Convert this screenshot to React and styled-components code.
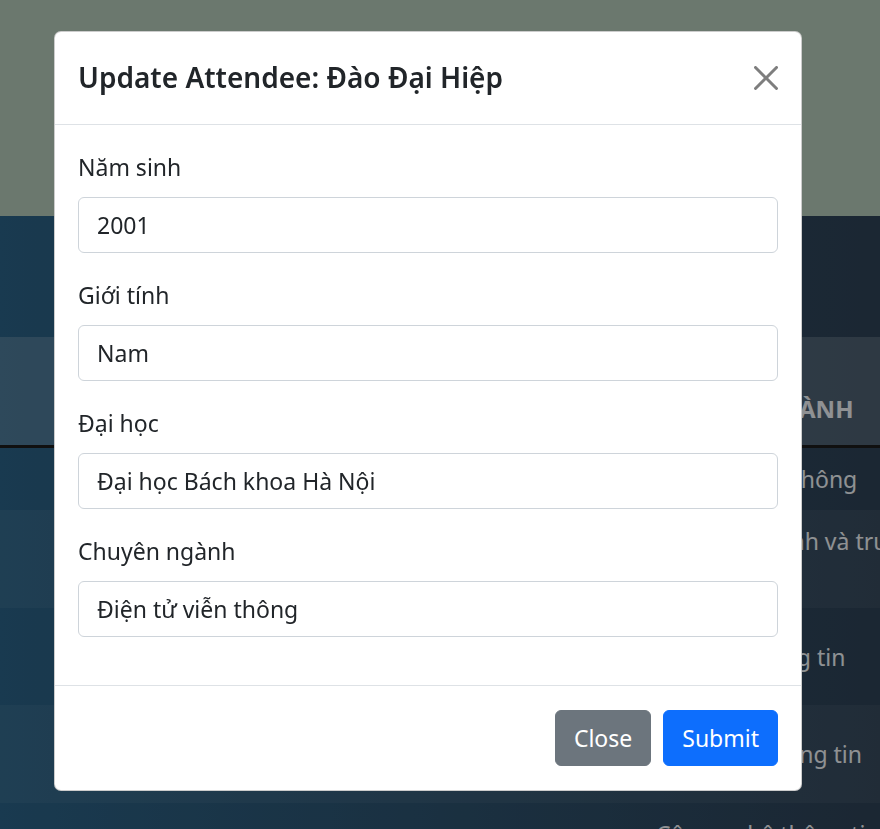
import React from 'react';
import styled, { createGlobalStyle } from 'styled-components';

const GlobalStyle = createGlobalStyle`
    * { box-sizing: border-box; }
    html, body {
        margin: 0;
        padding: 0;
        overflow: hidden;
    }
    body {
        font-family: "Noto Sans", "Open Sans", sans-serif;
        color: #212529;
    }
`;

const Page = styled.div`
    width: 100%;
    min-height: 100vh;
    background: linear-gradient(to right, #2b6185, #2d4155);
`;

const Hero = styled.div`
    height: 216px;
    background: #b2c8b7;
`;

const TableSection = styled.div`
    padding-top: 121px;
    overflow: hidden;
`;

const Table = styled.table`
    width: 984px;
    table-layout: fixed;
    border-collapse: collapse;
    font-size: 23px;
    line-height: 36px;
    color: #eef2f6;
`;

const HeadRow = styled.tr`
    background: rgba(255, 255, 255, 0.16);
    border-bottom: 3px solid #1c1c1c;
`;

const Th = styled.th`
    width: ${p => p.$w}px;
    height: 109px;
    padding: 0 12px 18px;
    font-size: 24px;
    text-align: ${p => (p.$center ? 'center' : 'left')};
    vertical-align: bottom;
    font-weight: 700;
    white-space: nowrap;
    overflow: hidden;
`;

const Row = styled.tr`
    height: ${p => p.$h}px;
    background: ${p => (p.$striped ? 'rgba(255, 255, 255, 0.05)' : 'transparent')};
`;

const Td = styled.td`
    padding: 0 12px;
    vertical-align: middle;
    text-align: ${p => (p.$center ? 'center' : 'left')};
    white-space: ${p => (p.$wrap ? 'normal' : 'nowrap')};
    overflow: hidden;
`;

const Backdrop = styled.div`
    position: fixed;
    inset: 0;
    background: rgba(0, 0, 0, 0.4);
`;

const Dialog = styled.div`
    position: fixed;
    top: 31px;
    left: 54px;
    width: 748px;
    background: #fff;
    border: 1px solid rgba(0, 0, 0, 0.2);
    border-radius: 7px;
    display: flex;
    flex-direction: column;
`;

const Header = styled.div`
    display: flex;
    align-items: center;
    justify-content: space-between;
    padding: 23px 23px 24px;
    border-bottom: 1px solid #dee2e6;
`;

const Title = styled.h5`
    margin: 0;
    font-size: 28px;
    font-weight: 600;
    line-height: 45px;
`;

const CloseX = styled.button`
    width: 24px;
    height: 24px;
    padding: 0;
    border: 0;
    background: transparent;
    color: #000;
    opacity: 0.5;
    cursor: pointer;
    svg { display: block; width: 24px; height: 24px; }
`;

const Body = styled.div`
    padding: 24px 23px 0;
`;

const Group = styled.div`
    margin-bottom: 24px;
`;

const Label = styled.label`
    display: block;
    margin-bottom: 12px;
    font-size: 23px;
    line-height: 36px;
`;

const Input = styled.input`
    display: block;
    width: 100%;
    height: 56px;
    padding: 9px 18px;
    font-family: inherit;
    font-size: 23px;
    line-height: 36px;
    color: #212529;
    background: #fff;
    border: 1px solid #ced4da;
    border-radius: 6px;
    outline: none;
`;

const Footer = styled.div`
    display: flex;
    justify-content: flex-end;
    align-items: center;
    padding: 18px 17px;
    margin-top: 24px;
    border-top: 1px solid #dee2e6;
`;

const Button = styled.button`
    margin: 6px;
    height: 56px;
    padding: 9px 18px;
    font-family: inherit;
    font-size: 23px;
    line-height: 36px;
    color: #fff;
    background: ${p => (p.$primary ? '#0d6efd' : '#6c757d')};
    border: 1px solid ${p => (p.$primary ? '#0d6efd' : '#6c757d')};
    border-radius: 6px;
    cursor: pointer;
`;

const columns = [
    { title: 'STT', w: 160, center: true },
    { title: 'HỌ VÀ TÊN', w: 190 },
    { title: 'NĂM SINH', w: 100 },
    { title: 'GIỚI TÍNH', w: 90 },
    { title: 'ĐẠI HỌC', w: 104 },
    { title: 'CHUYÊN NGÀNH', w: 340 },
];

const rows = [
    { h: 64, cells: ['1', 'Đào Đại Hiệp', '2001', 'Nam', 'ĐH Bách khoa', 'Điện tử viễn thông'] },
    { h: 98, cells: ['2', 'Nguyễn Văn An', '2000', 'Nam', 'ĐH Bách khoa', 'Mạng máy tính và truyền thông'] },
    { h: 97, cells: ['3', 'Trần Thị Bình', '2001', 'Nữ', 'ĐH Quốc gia', 'An toàn thông tin'] },
    { h: 98, cells: ['4', 'Lê Minh Châu', '2002', 'Nữ', 'ĐH Bách khoa', 'Hệ thống thông tin'] },
    { h: 98, cells: ['5', 'Phạm Quốc Dũng', '2001', 'Nam', 'ĐH Công nghệ', 'Công nghệ thông tin và truyền thông'] },
];

const fields = [
    { label: 'Năm sinh', value: '2001' },
    { label: 'Giới tính', value: 'Nam' },
    { label: 'Đại học', value: 'Đại học Bách khoa Hà Nội' },
    { label: 'Chuyên ngành', value: 'Điện tử viễn thông' },
];

export default function App() {
    return (
        <>
            <GlobalStyle />
            <Page>
                <Hero />
                <TableSection>
                    <Table>
                        <thead>
                            <HeadRow>
                                {columns.map(c => (
                                    <Th key={c.title} $w={c.w} $center={c.center}>{c.title}</Th>
                                ))}
                            </HeadRow>
                        </thead>
                        <tbody>
                            {rows.map((r, i) => (
                                <Row key={i} $h={r.h} $striped={i % 2 === 1}>
                                    {r.cells.map((c, j) => (
                                        <Td key={j} $center={j === 0} $wrap={j === r.cells.length - 1}>{c}</Td>
                                    ))}
                                </Row>
                            ))}
                        </tbody>
                    </Table>
                </TableSection>
            </Page>
            <Backdrop />
            <Dialog>
                <Header>
                    <Title>Update Attendee: Đào Đại Hiệp</Title>
                    <CloseX aria-label="Close">
                        <svg viewBox="0 0 16 16" fill="currentColor">
                            <path d="M.293.293a1 1 0 0 1 1.414 0L8 6.586 14.293.293a1 1 0 1 1 1.414 1.414L9.414 8l6.293 6.293a1 1 0 0 1-1.414 1.414L8 9.414l-6.293 6.293a1 1 0 0 1-1.414-1.414L6.586 8 .293 1.707a1 1 0 0 1 0-1.414z" />
                        </svg>
                    </CloseX>
                </Header>
                <Body>
                    {fields.map(f => (
                        <Group key={f.label}>
                            <Label>{f.label}</Label>
                            <Input defaultValue={f.value} />
                        </Group>
                    ))}
                </Body>
                <Footer>
                    <Button>Close</Button>
                    <Button $primary>Submit</Button>
                </Footer>
            </Dialog>
        </>
    );
}
